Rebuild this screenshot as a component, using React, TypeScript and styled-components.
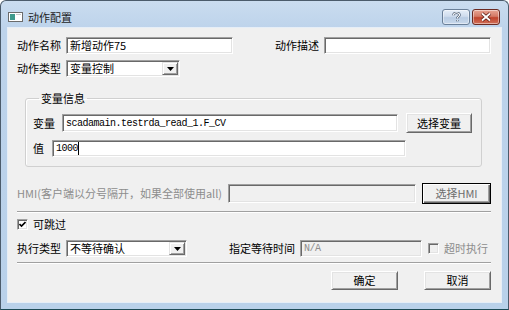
import React from "react";
import styled, { createGlobalStyle } from "styled-components";

const GlobalStyle = createGlobalStyle`
  html, body {
    margin: 0;
    padding: 0;
    background: #ffffff;
  }
  body {
    font-family: "Noto Sans CJK SC", "Liberation Sans", sans-serif;
    font-size: 11px;
    line-height: 13px;
    color: #000;
  }
`;

const Window = styled.div`
  box-sizing: border-box;
  width: 509px;
  height: 310px;
  display: flex;
  flex-direction: column;
  padding: 0 7px 7px 7px;
  background: linear-gradient(to bottom, #cadcef 0px, #bdd3eb 28px, #b9d1ea 100%);
  border: 1px solid #4b5b6b;
  border-bottom-color: #1d4b57;
  border-radius: 6px 6px 0 0;
`;

const TitleBar = styled.div`
  height: 27px;
  display: flex;
  align-items: flex-start;
  padding-top: 8px;
  box-sizing: border-box;
`;

const TitleIcon = styled.svg`
  margin-top: 3px;
  flex: none;
`;

const TitleText = styled.div`
  margin-left: 5px;
  margin-top: 2px;
  font-size: 11px;
  color: #1e1e1e;
  flex: 1;
`;

const CaptionButton = styled.div<{ $close?: boolean }>`
  box-sizing: border-box;
  width: 28px;
  height: 16px;
  display: flex;
  align-items: center;
  justify-content: center;
  border: 1px solid ${(p) => (p.$close ? "#6b2a22" : "#6a7f98")};
  border-radius: 3px;
  margin-left: ${(p) => (p.$close ? "2px" : "0")};
  margin-right: ${(p) => (p.$close ? "1px" : "0")};
  background: ${(p) =>
    p.$close
      ? "linear-gradient(to bottom, #e8a493 0%, #d47a66 45%, #c0432c 55%, #d0705a 100%)"
      : "linear-gradient(to bottom, #e6eef8 0%, #cfdced 45%, #b9cce3 55%, #c9d9ec 100%)"};
  box-shadow: inset 0 0 0 1px rgba(255, 255, 255, 0.45);
`;

const Client = styled.div`
  flex: 1;
  background: #f0f0f0;
  padding: 9px 10px 0 9px;
  display: flex;
  flex-direction: column;
  box-shadow: 0 0 0 1px #e6eef7;
`;

const Row = styled.div<{ $mt?: number; $h?: number }>`
  display: flex;
  align-items: center;
  margin-top: ${(p) => p.$mt ?? 0}px;
  height: ${(p) => p.$h ?? 17}px;
`;

const ButtonRow = styled(Row)`
  justify-content: flex-end;
  gap: 26px;
`;

const Label = styled.span<{ $disabled?: boolean; $gap?: number }>`
  white-space: nowrap;
  margin-right: ${(p) => p.$gap ?? 5}px;
  color: ${(p) => (p.$disabled ? "#8d8d8d" : "#000")};
`;

const TextBox = styled.div<{ $w: number; $h?: number; $disabled?: boolean; $mr?: number }>`
  box-sizing: border-box;
  flex: none;
  width: ${(p) => p.$w}px;
  height: ${(p) => p.$h ?? 17}px;
  margin-right: ${(p) => p.$mr ?? 0}px;
  padding: 0 3px;
  display: flex;
  align-items: center;
  overflow: hidden;
  white-space: nowrap;
  background: ${(p) => (p.$disabled ? "#f0f0f0" : "#ffffff")};
  color: ${(p) => (p.$disabled ? "#8d8d8d" : "#000")};
  border: 1px solid;
  border-color: #a0a0a0 #ffffff #ffffff #a0a0a0;
  box-shadow: inset 1px 1px 0 #696969, inset -1px -1px 0 #e3e3e3;
`;

const Mono = styled.span`
  font-family: "Liberation Mono", monospace;
  font-size: 10px;
  letter-spacing: -0.5px;
`;

const Caret = styled.span`
  display: inline-block;
  width: 1px;
  height: 13px;
  background: #000;
`;

const Combo = styled(TextBox)`
  padding: 0 0 0 3px;
`;

const ComboText = styled.span`
  flex: 1;
`;

const ComboArrow = styled.div`
  box-sizing: border-box;
  width: 16px;
  height: 13px;
  margin-right: 1px;
  display: flex;
  align-items: center;
  justify-content: center;
  background: #f0f0f0;
  border: 1px solid;
  border-color: #e3e3e3 #696969 #696969 #e3e3e3;
  box-shadow: inset 1px 1px 0 #ffffff, inset -1px -1px 0 #a0a0a0;
`;

const Button = styled.div<{ $w: number; $h: number; $isDefault?: boolean; $disabled?: boolean }>`
  box-sizing: border-box;
  flex: none;
  width: ${(p) => p.$w}px;
  height: ${(p) => p.$h}px;
  display: flex;
  align-items: center;
  justify-content: center;
  background: #f0f0f0;
  color: ${(p) => (p.$disabled ? "#6d6d6d" : "#000")};
  border: 1px solid;
  border-color: ${(p) => (p.$isDefault ? "#000" : "#ffffff #696969 #696969 #ffffff")};
  box-shadow: ${(p) =>
    p.$isDefault
      ? "inset 1px 1px 0 #ffffff, inset -1px -1px 0 #696969, inset -2px -2px 0 #a0a0a0"
      : "inset 1px 1px 0 #e3e3e3, inset -1px -1px 0 #a0a0a0"};
`;

const GroupBox = styled.fieldset`
  margin: 14px 9px 0 8px;
  padding: 8px 9px 9px 7px;
  border: 1px solid #d0d0d0;
  border-radius: 3px;
  box-shadow: inset 1px 1px 0 #ffffff;
  display: flex;
  flex-direction: column;
`;

const Legend = styled.legend`
  padding: 0 2px;
  margin-left: 6px;
  line-height: 14px;
  height: 14px;
`;

const Separator = styled.div<{ $mt: number }>`
  height: 0;
  margin-top: ${(p) => p.$mt}px;
  border-top: 1px solid #a0a0a0;
  border-bottom: 1px solid #ffffff;
`;

const CheckRow = styled.label<{ $disabled?: boolean }>`
  display: flex;
  align-items: center;
  color: ${(p) => (p.$disabled ? "#8d8d8d" : "#000")};
`;

const CheckBox = styled.span<{ $disabled?: boolean }>`
  box-sizing: border-box;
  width: 11px;
  height: 11px;
  margin-right: 5px;
  display: flex;
  align-items: center;
  justify-content: center;
  background: ${(p) => (p.$disabled ? "#f0f0f0" : "#ffffff")};
  border: 1px solid;
  border-color: #a0a0a0 #ffffff #ffffff #a0a0a0;
  box-shadow: inset 1px 1px 0 #696969, inset -1px -1px 0 #e3e3e3;
`;

const Spacer = styled.div`
  flex: 1;
`;

const Arrow = () => (
  <svg width="7" height="4" viewBox="0 0 7 4">
    <path d="M0 0h7L3.5 4z" fill="#000" />
  </svg>
);

const Check = () => (
  <svg width="7" height="7" viewBox="0 0 7 7">
    <path d="M0.5 3l2 2L6.5 1" stroke="#000" strokeWidth="1.6" fill="none" />
  </svg>
);

const ComboBox: React.FC<{ w: number; text: string; mr?: number }> = ({ w, text, mr }) => (
  <Combo $w={w} $mr={mr}>
    <ComboText>{text}</ComboText>
    <ComboArrow>
      <Arrow />
    </ComboArrow>
  </Combo>
);

export default function App() {
  return (
    <>
      <GlobalStyle />
      <Window>
        <TitleBar>
          <TitleIcon width="15" height="10" viewBox="0 0 15 10">
            <rect x="0.5" y="0.5" width="14" height="9" fill="#ffffff" stroke="#6b6b6b" />
            <rect x="2" y="2" width="5" height="6" fill="#3f9a8c" />
            <rect x="8" y="2" width="5" height="1" fill="#c8c8c8" />
          </TitleIcon>
          <TitleText>动作配置</TitleText>
          <CaptionButton>
            <svg width="9" height="10" viewBox="0 0 9 10">
              <path
                d="M1.5 3.2C1.5 1.5 3 0.8 4.5 0.8S7.5 1.6 7.5 3c0 1.6-2.2 1.8-2.2 3.5M5.3 8v1.2"
                stroke="#3d4f66"
                strokeWidth="2.4"
                fill="none"
              />
              <path
                d="M1.5 3.2C1.5 1.5 3 0.8 4.5 0.8S7.5 1.6 7.5 3c0 1.6-2.2 1.8-2.2 3.5M5.3 8v1.2"
                stroke="#ffffff"
                strokeWidth="1.1"
                fill="none"
              />
            </svg>
          </CaptionButton>
          <CaptionButton $close>
            <svg width="12" height="10" viewBox="0 0 12 10">
              <path d="M2 1.5l8 7M10 1.5l-8 7" stroke="#5a1d14" strokeWidth="3.4" />
              <path d="M2 1.5l8 7M10 1.5l-8 7" stroke="#ffffff" strokeWidth="1.8" />
            </svg>
          </CaptionButton>
        </TitleBar>

        <Client>
          <Row>
            <Label>动作名称</Label>
            <TextBox $w={167}>新增动作75</TextBox>
            <Spacer />
            <Label>动作描述</Label>
            <TextBox $w={167} />
          </Row>

          <Row $mt={6}>
            <Label>动作类型</Label>
            <ComboBox w={114} text="变量控制" />
          </Row>

          <GroupBox>
            <Legend>变量信息</Legend>
            <Row $h={20}>
              <Label $gap={7}>变量</Label>
              <TextBox $w={336} $h={18} $mr={8}>
                <Mono>scadamain.testrda_read_1.F_CV</Mono>
              </TextBox>
              <Button $w={66} $h={20}>选择变量</Button>
            </Row>
            <Row $mt={7}>
              <Label $gap={8}>值</Label>
              <TextBox $w={354}>
                <Mono>1000</Mono>
                <Caret />
              </TextBox>
            </Row>
          </GroupBox>

          <Row $mt={16} $h={21}>
            <Label $disabled>HMI(客户端以分号隔开，如果全部使用all)</Label>
            <Spacer />
            <TextBox $w={188} $h={19} $mr={6} $disabled />
            <Button $w={69} $h={21} $isDefault $disabled>
              选择HMI
            </Button>
          </Row>

          <Separator $mt={7} />

          <Row $mt={5} $h={13}>
            <CheckRow>
              <CheckBox>
                <Check />
              </CheckBox>
              可跳过
            </CheckRow>
          </Row>

          <Row $mt={9}>
            <Label>执行类型</Label>
            <ComboBox w={121} text="不等待确认" mr={42} />
            <Label>指定等待时间</Label>
            <TextBox $w={122} $mr={6} $disabled>
              <Mono>N/A</Mono>
            </TextBox>
            <CheckRow $disabled>
              <CheckBox $disabled />
              超时执行
            </CheckRow>
          </Row>

          <Separator $mt={5} />

          <ButtonRow $mt={7} $h={19}>
            <Button $w={67} $h={19}>确定</Button>
            <Button $w={67} $h={19}>取消</Button>
          </ButtonRow>
        </Client>
      </Window>
    </>
  );
}
